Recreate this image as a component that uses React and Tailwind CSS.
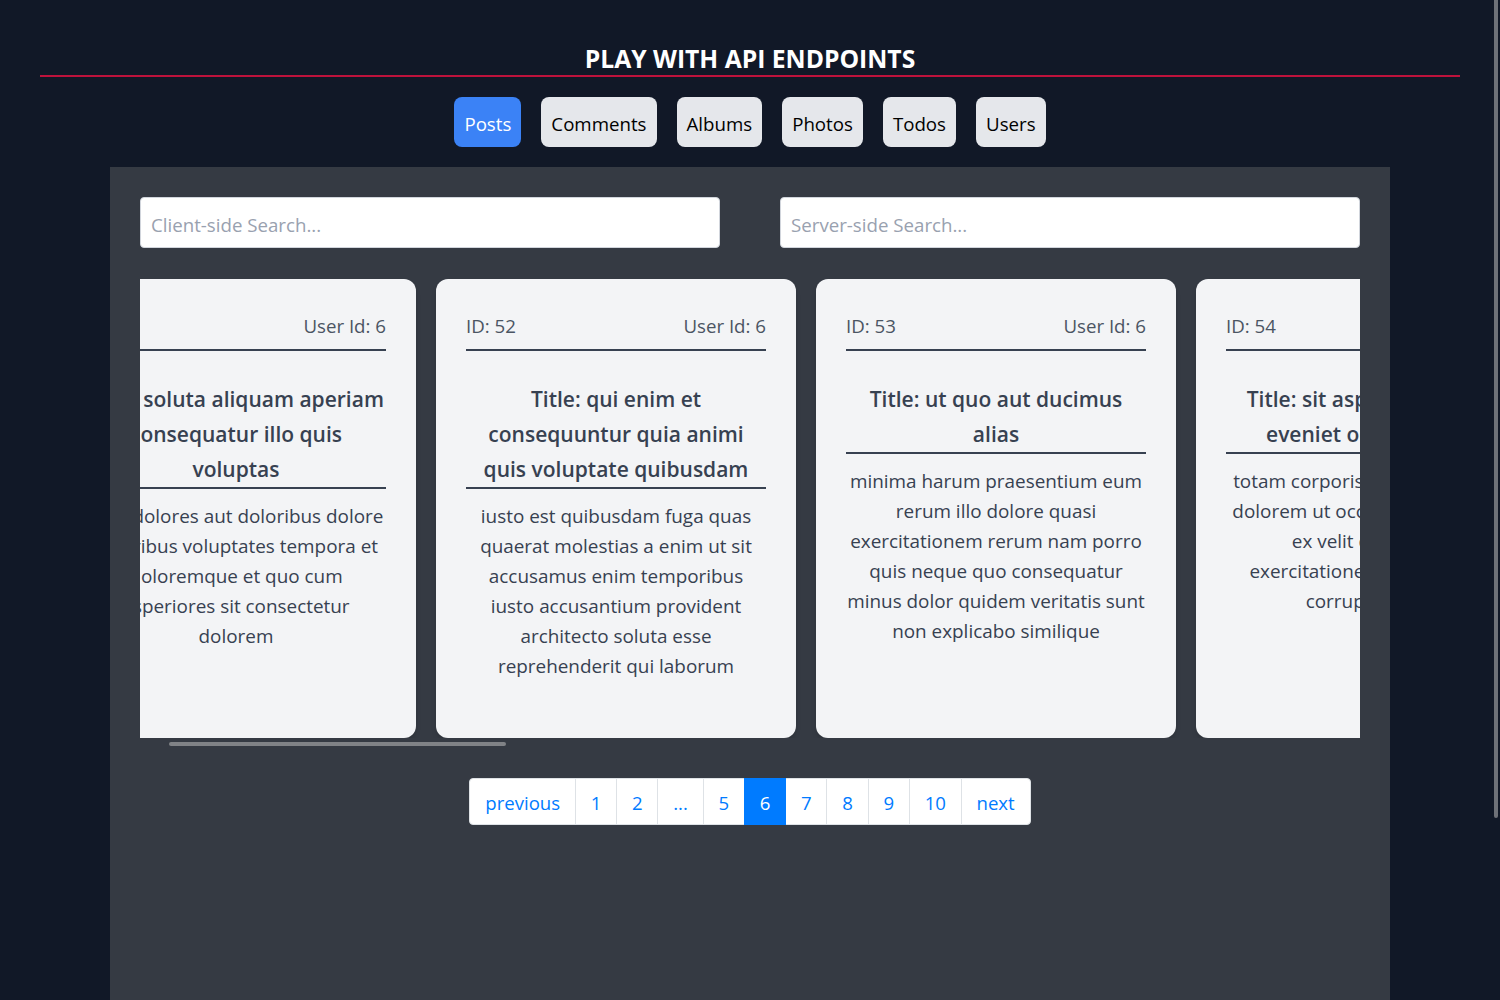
import { useEffect, useRef, useState } from 'react';

const tabs = ['Posts', 'Comments', 'Albums', 'Photos', 'Todos', 'Users'];

const posts = [
  { id: 51, userId: 6, title: 'soluta aliquam aperiam consequatur illo quis voluptas', body: 'sunt dolores aut doloribus dolore doloribus voluptates tempora et doloremque et quo cum asperiores sit consectetur dolorem' },
  { id: 52, userId: 6, title: 'qui enim et consequuntur quia animi quis voluptate quibusdam', body: 'iusto est quibusdam fuga quas quaerat molestias a enim ut sit accusamus enim temporibus iusto accusantium provident architecto soluta esse reprehenderit qui laborum' },
  { id: 53, userId: 6, title: 'ut quo aut ducimus alias', body: 'minima harum praesentium eum rerum illo dolore quasi exercitationem rerum nam porro quis neque quo consequatur minus dolor quidem veritatis sunt non explicabo similique' },
  { id: 54, userId: 6, title: 'sit asperiores ipsam eveniet odio non quia', body: 'totam corporis dignissimos vitae dolorem ut occaecati accusamus ex velit deserunt et exercitationem vero incidunt corrupti mollitia' },
  { id: 55, userId: 6, title: 'fugit voluptas sed molestias voluptatem provident', body: 'eos voluptas et aut odit natus earum aspernatur fuga molestiae ullam deserunt ratione qui eos qui nihil ratione nemo velit ut aut id quo' },
  { id: 56, userId: 6, title: 'voluptate et itaque vero tempora molestiae', body: 'eveniet quo quis laborum totam consequatur non dolor ut et est repudiandae est voluptatem vel debitis et magnam' },
  { id: 57, userId: 6, title: 'sed ab est est', body: 'at pariatur consequuntur earum quidem quo est laudantium soluta voluptatem qui ullam et est et cum voluptas voluptatum repellat est' },
  { id: 58, userId: 6, title: 'voluptatum itaque dolores nisi et quasi', body: 'veniam voluptatum quae adipisci id et id quia eos ad et dolorem aliquam quo nisi sunt eos impedit error ad similique veniam' },
  { id: 59, userId: 6, title: 'qui commodi dolor at maiores et quis id accusantium', body: 'perspiciatis et quam ea autem temporibus non voluptatibus qui beatae a earum officia nesciunt dolores suscipit voluptas et animi doloribus cum rerum quas et magni et hic ut ut commodi expedita sunt' },
  { id: 60, userId: 6, title: 'consequatur placeat omnis quisquam quia reprehenderit fugit veritatis facere', body: 'asperiores sunt ab assumenda cumque modi velit qui esse omnis voluptate et fuga perferendis voluptas illo ratione amet aut et omnis' },
];

const pages = ['previous', '1', '2', '...', '5', '6', '7', '8', '9', '10', 'next'];

function PostCard({ post }) {
  return (
    <div className="w-[360px] h-[459px] shrink-0 rounded-xl bg-[#f3f4f6] px-[30px] pt-[33px] text-center text-[#374151] shadow-md">
      <div className="flex justify-between border-b-2 border-[#374151] pb-[9px] text-[18.7px] leading-7 text-[#4b5563]">
        <span>ID: {post.id}</span>
        <span>User Id: {post.userId}</span>
      </div>
      <h2 className="mt-[31px] border-b-2 border-[#374151] text-[21px] font-semibold leading-[35px]">
        Title: {post.title}
      </h2>
      <p className="mt-3 text-[18.9px] leading-[30px]">{post.body}</p>
    </div>
  );
}

export default function App() {
  const [tab, setTab] = useState('Posts');
  const rowRef = useRef(null);

  useEffect(() => {
    if (rowRef.current) rowRef.current.scrollLeft = 84;
  }, []);

  return (
    <div className="min-h-screen bg-[#111827] font-['Open_Sans',sans-serif]">
      {/* page scroll indicator */}
      <div className="fixed right-[2px] top-0 z-20 h-[818px] w-1 rounded-b-sm bg-[#6e7178]" />

      {/* Header */}
      <header className="mx-10 pt-[43px] border-b-2 border-[#be123c] text-center">
        <h1 className="text-[24.7px] leading-8 font-bold uppercase text-white">Play with API endpoints</h1>
      </header>

      {/* Tabs */}
      <nav className="mt-5 flex justify-center gap-5">
        {tabs.map((t) => (
          <button
            key={t}
            onClick={() => setTab(t)}
            className={`h-[50px] rounded-lg px-2.5 pt-1 text-[18.7px] ${t === tab ? 'bg-[#3b82f6] text-white' : 'bg-[#e5e7eb] text-black'}`}
          >
            {t}
          </button>
        ))}
      </nav>

      {/* Panel */}
      <main className="mx-auto mt-5 min-h-[1055px] w-[1280px] bg-[#353a43] p-[30px]">
        <div className="grid grid-cols-2 gap-[60px]">
          <input
            placeholder="Client-side Search..."
            className="h-[51px] rounded-sm border border-gray-300 bg-white px-2.5 pt-[3px] text-[18.7px] text-gray-800 outline-none placeholder:text-gray-400"
          />
          <input
            placeholder="Server-side Search..."
            className="h-[51px] rounded-sm border border-gray-300 bg-white px-2.5 pt-[3px] text-[18.7px] text-gray-800 outline-none placeholder:text-gray-400"
          />
        </div>

        <div ref={rowRef} className="mt-[31px] flex gap-5 overflow-x-auto">
          {posts.map((p) => (
            <PostCard key={p.id} post={p} />
          ))}
        </div>
        {/* row scroll indicator */}
        <div className="mt-1 ml-[29px] h-1 w-[337px] rounded-full bg-[#808286]" />

        {/* Pagination */}
        <ul className="mt-8 flex justify-center">
          {pages.map((p, i) => {
            const active = p === '6';
            return (
              <li key={p} className={i === 0 ? '' : '-ml-px'}>
                <a
                  href="#"
                  className={`block border px-[14.8px] pt-[10px] pb-[8px] text-[18.6px] leading-[27px] ${
                    active ? 'relative z-10 border-[#007bff] bg-[#007bff] text-white' : 'border-[#dee2e6] bg-white text-[#007bff]'
                  } ${i === 0 ? 'rounded-l' : ''} ${i === pages.length - 1 ? 'rounded-r' : ''}`}
                >
                  {p}
                </a>
              </li>
            );
          })}
        </ul>
      </main>
    </div>
  );
}
